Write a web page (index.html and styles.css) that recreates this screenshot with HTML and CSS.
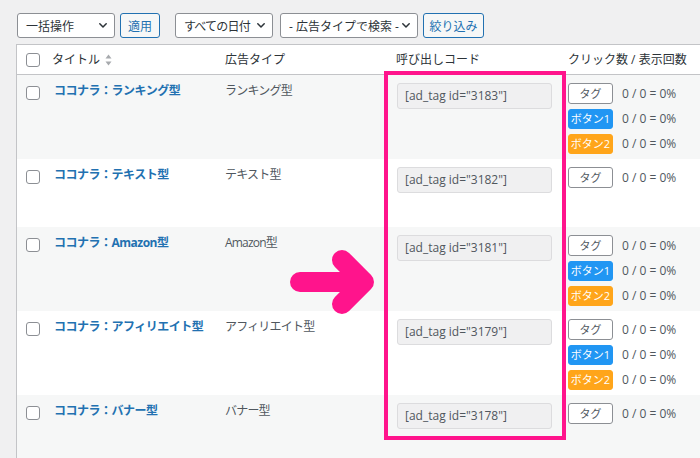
FILE: index.html
```html
<!DOCTYPE html>
<html lang="ja">
<head>
<meta charset="utf-8">
<title>広告一覧</title>
<link rel="stylesheet" href="styles.css">
</head>
<body>
<div class="page">
  <div class="toolbar">
    <div class="select w-bulk"><span>一括操作</span><svg class="chev" width="8" height="5" viewBox="0 0 8 5"><path d="M0.8 0.8 L4 4 L7.2 0.8" /></svg></div>
    <div class="btn">適用</div>
    <div class="select w-date"><span>すべての日付</span><svg class="chev" width="8" height="5" viewBox="0 0 8 5"><path d="M0.8 0.8 L4 4 L7.2 0.8" /></svg></div>
    <div class="select w-type"><span>- 広告タイプで検索 -</span><svg class="chev" width="8" height="5" viewBox="0 0 8 5"><path d="M0.8 0.8 L4 4 L7.2 0.8" /></svg></div>
    <div class="btn w-filter">絞り込み</div>
  </div>

  <div class="table">
    <div class="row head">
      <div class="cell cb"><span class="check"></span></div>
      <div class="cell title-h">タイトル<svg class="sort" width="7" height="12" viewBox="0 0 7 12"><path d="M3.5 0.5 L6.5 4.5 H0.5 Z M3.5 11.5 L6.5 7.5 H0.5 Z" /></svg></div>
      <div class="cell">広告タイプ</div>
      <div class="cell code-h">呼び出しコード</div>
      <div class="cell">クリック数 / 表示回数</div>
    </div>

    <div class="row alt">
      <div class="cell cb"><span class="check"></span></div>
      <div class="cell name">ココナラ：ランキング型</div>
      <div class="cell type">ランキング型</div>
      <div class="cell code"><div class="input">[ad_tag id="3183"]</div></div>
      <div class="cell clicks">
        <div class="line"><span class="tag">タグ</span><span class="stat">0 / 0 = 0%</span></div>
        <div class="line"><span class="tag b1">ボタン1</span><span class="stat">0 / 0 = 0%</span></div>
        <div class="line"><span class="tag b2">ボタン2</span><span class="stat">0 / 0 = 0%</span></div>
      </div>
    </div>

    <div class="row">
      <div class="cell cb"><span class="check"></span></div>
      <div class="cell name">ココナラ：テキスト型</div>
      <div class="cell type">テキスト型</div>
      <div class="cell code"><div class="input">[ad_tag id="3182"]</div></div>
      <div class="cell clicks">
        <div class="line"><span class="tag">タグ</span><span class="stat">0 / 0 = 0%</span></div>
      </div>
    </div>

    <div class="row alt">
      <div class="cell cb"><span class="check"></span></div>
      <div class="cell name">ココナラ：Amazon型</div>
      <div class="cell type">Amazon型</div>
      <div class="cell code"><div class="input">[ad_tag id="3181"]</div></div>
      <div class="cell clicks">
        <div class="line"><span class="tag">タグ</span><span class="stat">0 / 0 = 0%</span></div>
        <div class="line"><span class="tag b1">ボタン1</span><span class="stat">0 / 0 = 0%</span></div>
        <div class="line"><span class="tag b2">ボタン2</span><span class="stat">0 / 0 = 0%</span></div>
      </div>
    </div>

    <div class="row">
      <div class="cell cb"><span class="check"></span></div>
      <div class="cell name">ココナラ：アフィリエイト型</div>
      <div class="cell type">アフィリエイト型</div>
      <div class="cell code"><div class="input">[ad_tag id="3179"]</div></div>
      <div class="cell clicks">
        <div class="line"><span class="tag">タグ</span><span class="stat">0 / 0 = 0%</span></div>
        <div class="line"><span class="tag b1">ボタン1</span><span class="stat">0 / 0 = 0%</span></div>
        <div class="line"><span class="tag b2">ボタン2</span><span class="stat">0 / 0 = 0%</span></div>
      </div>
    </div>

    <div class="row alt">
      <div class="cell cb"><span class="check"></span></div>
      <div class="cell name">ココナラ：バナー型</div>
      <div class="cell type">バナー型</div>
      <div class="cell code"><div class="input">[ad_tag id="3178"]</div></div>
      <div class="cell clicks">
        <div class="line"><span class="tag">タグ</span><span class="stat">0 / 0 = 0%</span></div>
      </div>
    </div>
  </div>

  <div class="highlight"></div>
  <svg class="arrow" width="100" height="80" viewBox="0 0 100 80">
    <path d="M10 40 H72 M52 18 L74 40 L52 62" />
  </svg>
</div>
</body>
</html>
```

FILE: styles.css
```css
* { box-sizing: border-box; }

html, body {
  margin: 0;
  padding: 0;
}

body {
  background: #f0f0f1;
  font-family: "Open Sans", "Noto Sans CJK JP", sans-serif;
  font-size: 12px;
  color: #2c3338;
  overflow: hidden;
}

.page {
  position: relative;
  width: 700px;
  height: 458px;
  overflow: hidden;
  padding: 13px 0 0 17px;
}

/* toolbar */
.toolbar {
  display: flex;
  align-items: center;
  height: 25px;
}

.select {
  display: flex;
  align-items: center;
  justify-content: space-between;
  height: 25px;
  padding: 0 7px 0 8px;
  background: #fff;
  border: 1px solid #8c8f94;
  border-radius: 3px;
  color: #2c3338;
  font-size: 12px;
  white-space: nowrap;
}

.chev {
  flex: none;
}

.chev path {
  fill: none;
  stroke: #2c3338;
  stroke-width: 1.5;
  stroke-linecap: round;
  stroke-linejoin: round;
}

.w-bulk { width: 98px; margin-right: 5px; }
.w-date { width: 98px; margin-left: 15px; margin-right: 7px; padding-right: 7px; }
.w-date span { letter-spacing: -0.8px; }
.w-type { width: 138px; margin-right: 5px; }

.btn {
  display: flex;
  align-items: center;
  justify-content: center;
  width: 40px;
  height: 25px;
  background: #f6f7f7;
  border: 1px solid #2271b1;
  border-radius: 3px;
  color: #2271b1;
  font-size: 12px;
}

.w-filter { width: 61px; }

/* table */
.table {
  margin-top: 6px;
  margin-left: -1px;
  width: 720px;
  background: #fff;
  border-top: 1px solid #c3c4c7;
  border-left: 1px solid #c3c4c7;
}

.row {
  display: grid;
  grid-template-columns: 27px 173px 171px 172px 1fr;
  min-height: 68px;
  background: #fff;
}

.row.alt { background: #f6f7f7; }

.row.head {
  min-height: 0;
  height: 30px;
  background: #fff;
  border-bottom: 1px solid #c3c4c7;
  align-items: center;
}

.cell {
  padding: 7px 0 0 8px;
  line-height: 18px;
  white-space: nowrap;
}

.head .cell {
  padding: 0 0 0 8px;
  color: #2c3338;
}

.cb { padding: 11px 0 0 9px; }
.head .cb { padding: 1px 0 0 9px; }

.check {
  display: block;
  width: 14px;
  height: 14px;
  background: #fff;
  border: 1px solid #8c8f94;
  border-radius: 3px;
}

.title-h {
  color: #2271b1;
  display: flex;
  align-items: center;
}

.sort { margin-left: 5px; }
.sort path { fill: #a7aaad; }

.code-h { padding-left: 9px; }

.name {
  padding-left: 10px;
  color: #2271b1;
  font-weight: 700;
  letter-spacing: -0.5px;
}

.type {
  color: #50575e;
  letter-spacing: -0.8px;
}

.code { padding-left: 9px; padding-top: 8px; }

.input {
  width: 155px;
  height: 26px;
  display: flex;
  align-items: center;
  padding-left: 7px;
  background: #f0f0f1;
  border: 1px solid #dcdcde;
  border-radius: 3px;
  color: #50575e;
  font-size: 12px;
}

.clicks {
  display: flex;
  flex-direction: column;
  gap: 4px;
  padding: 8px 0 5px 8px;
}

.line {
  display: flex;
  align-items: center;
  height: 21px;
}

.tag {
  display: flex;
  align-items: center;
  justify-content: center;
  width: 45px;
  height: 21px;
  background: #fff;
  border: 1px solid #8c8f94;
  border-radius: 3px;
  color: #50575e;
  font-size: 11px;
}

.tag.b1 {
  background: #2196f3;
  border-color: #2196f3;
  color: #fff;
  height: 20px;
}

.tag.b2 {
  background: #ffa51a;
  border-color: #ffa51a;
  color: #fff;
  height: 20px;
}

.stat {
  margin-left: 9px;
  color: #50575e;
  font-size: 12px;
}

/* annotations */
.highlight {
  position: absolute;
  left: 384px;
  top: 71px;
  width: 182px;
  height: 369px;
  border: 4px solid #ff148c;
}

.arrow {
  position: absolute;
  left: 290px;
  top: 242px;
}

.arrow path {
  fill: none;
  stroke: #ff148c;
  stroke-width: 20;
  stroke-linecap: round;
  stroke-linejoin: round;
}
```
